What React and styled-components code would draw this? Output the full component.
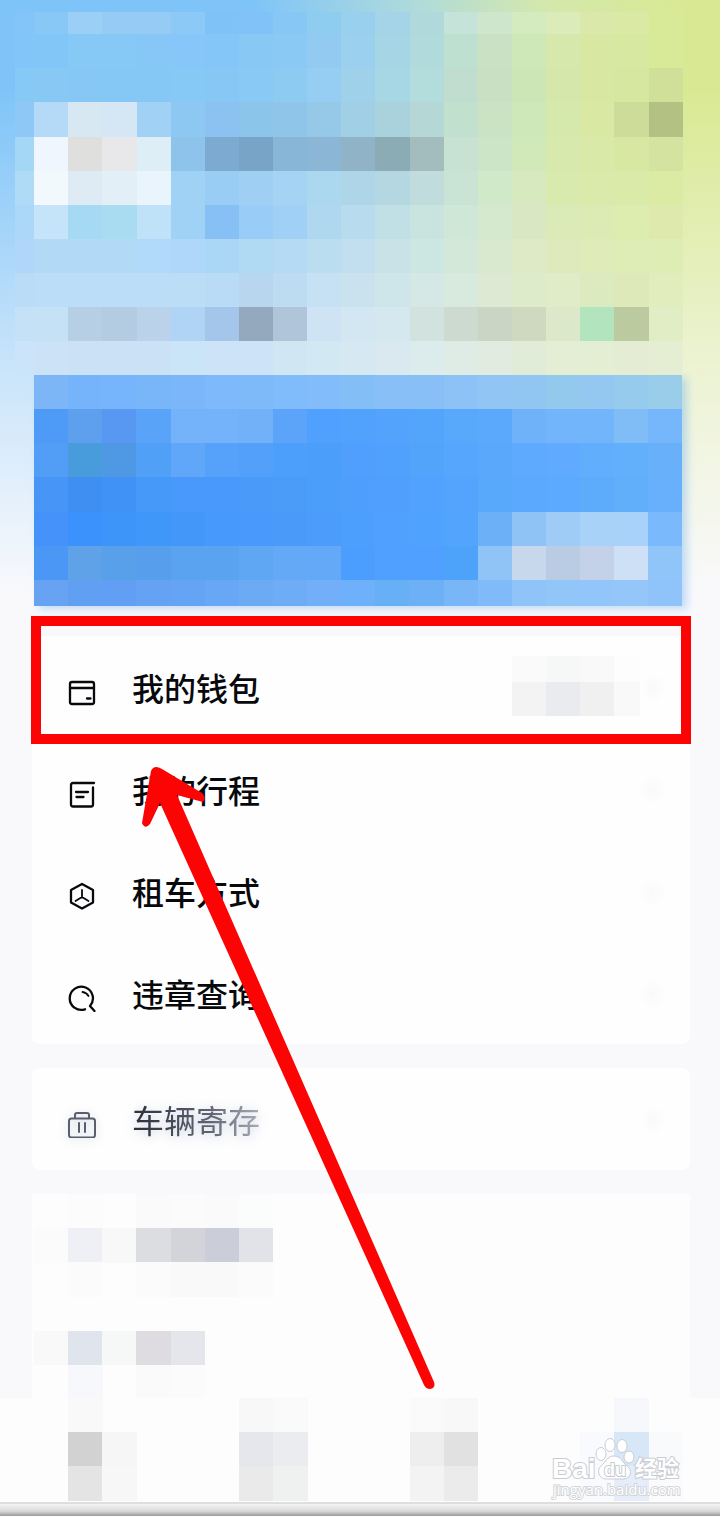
import styled, { createGlobalStyle, css } from "styled-components";

const CELL = 1024 / 30;

// Each row: space separated hex colours, "." leaves the cell empty
const PROFILE_ROWS = [
  "83c5f8 88c8f7 9bcff6 96cbf5 96cbf5 8cc9f7 7fc2f8 81c3f8 87c7f5 8ecdf0 99d0ee a5d4e8 b0d9db c5e3d8 cee6cb d4eabf dcebba dae9a9 dae9a4 d8e998",
  "82c5f8 82c5f7 86c8f6 86c8f6 86c7f7 86c6f9 85c6f9 87c8f5 8ac9f3 92caf1 9bd0ee a6d6e5 b0dadb bee0d0 cae2c3 cee8b7 d6e8ab d8e8a2 d7e8a1 d8e998",
  "86c8f6 88c8f5 86c7f5 85c8f5 85c8f5 87c9f6 87c7f5 89c9f5 8dcbf3 95cef2 9fd1ea a7d6e4 b3dcdc c0ddd0 c9e1c2 cce6b6 d5e7aa d8e8a2 d6e79f d1e098",
  "8dc8f6 b4daf7 d8e8f2 d5e7f4 a1d2f6 8dc8f3 8cc2f1 8cc5ea 90c5ea 96c9e8 a0cfe6 aad2dd b5d8d7 c1e0ce cbe3c3 cfe8b9 d6e9ad d9e9a3 cddc98 b3c283",
  "a4d6f6 eff6fd dfe0de e8e8ea deeef7 8ec4eb 7caad0 78a4c8 88b6d7 8cb6d6 90b3c8 8babb5 a3bdbe c7e2d3 cde5c7 d1e8b9 d7e9ad d9e9a8 d8e8a2 d4e39f",
  "b0dbf7 f2f9fc deebf5 e2eff7 e9f4fc a0d2f6 99cdf3 9fd0f3 a5d3f4 acd8ef aed5e8 b5d7e1 c1dcdc c9e4d5 d0e9c9 d6e9bf d9eaaf d9eaaa daeaa8 dceba4",
  "abd8f8 c5e3f9 a6d9f3 a9dbf1 c0e2f8 a0d2f6 87c0f5 99ccf6 a0d0f5 afd8f0 b8dcee c1e0e6 c9e4df cee7d7 d4e9ce dae7c3 dbebb7 dcebb3 ddecaf deeaad",
  "b0d7fa b2daf7 b2daf6 b2daf7 b0d9fa afd7f9 abd7f7 b0d9f4 b5daf3 badef0 c2dff0 c8e2e8 cce6e1 d3e8d9 d9e9cf ddeac5 deeabc dfecb9 deecb5 deedb3",
  "badcf6 bbddf7 bbddf7 bbddf7 bbddf7 bbdef6 b9dbf6 b9d6ef bedcf1 c5e1f3 cae1ee cee6ea d6e8e5 d8e9dd dee9d3 deebcb dfecc7 dcebbf dee9ba e1edbc",
  "c4e1f8 c5e1f6 b7cfe5 b3cce2 bad3ea b0d4f6 a4c6ea 94a9be b0c5da cee4f4 d3e7f3 d6e8ef d2e2df cddad0 cad5c6 cfd9c0 dbe8ca b2e5bd bbca9f e1edc5",
  "cce4fa cce3f7 cbe1f6 cbe1f6 cbe1f6 cae5f7 cde3f7 cde3f7 d0e7f3 d2e8f3 d6e8f2 dae9f0 dcebeb deece5 e1ebdf e0ebd8 e3eed5 e4eed3 e4edd3 e5eed2",
];

const BANNER_ROWS = [
  "7db6f6 75b3fb 76b4fb 79b5f9 7bb5fa 7eb9fb 7ebafa 80bbfb 82bcfa 84bef6 88bff7 88bff7 8cc2f5 90c5f4 91c6f3 94c9ee 94c8f0 97cbee 9acdea",
  "4e9bf7 5fa0ee 5898f2 59a3f9 74b2fa 74b2fa 72b1f8 5ba4fa 4fa0ff 51a2fc 53a3fd 53a5fc 58a8fc 5ba9fd 70b2fa 73b5fa 72b5fb 80bdf7 75b7fa",
  "529df5 489cdb 4f98e3 51a0f8 60a6f9 56a1f9 52a0fa 4d9ffc 4b9ffb 509fff 50a1fe 52a4fb 55a6fc 59a8fb 5daaff 60abff 60aefc 62affb 68b0f9",
  "4795f7 3f8ef1 4192f6 4698f9 4899fb 4899fb 4a9bf9 4b9cf9 4c9efb 4e9ffd 509fff 51a2fe 54a4fd 58a8fc 5aa9fe 5baaff 5cacfb 61aefb 68b0fb",
  "4492fa 3c92fc 3e95f9 3f97f9 4297f9 479afb 4899fb 4a9bf9 4b9cfb 4c9ffd 4fa0ff 50a2ff 53a4fc 6cb1f8 8fc3f6 9fccf6 a8d2f8 a9d2fa 79b9fc",
  "4a97f5 60a2e8 58a1ea 579fed 5aa3f0 5aa3f0 60a7f3 64a9f5 64a9f7 4b9efd 4fa0ff 50a1ff 4ca3f9 90c4f7 c7d8ed bacce3 c3d2e8 cee0f5 90c5fa",
  "68a2f3 609ff1 629ff4 65a2f4 65a3f4 68a6f6 6caaf4 6eacf6 72aff8 6eb0f9 67b0f5 6eb0f5 78b6f8 80baf8 90c4f8 92c5f8 92c5fa 94c6fa 8fc3fa",
];

const MORE_ROWS = [
  ". fcfcfc . fafafa fafbfa fafafa fbfcfc . . . . . . . . . . . .",
  "fbfbfb eef0f5 f8f8f8 dcdde1 d3d4da cbced8 e2e3e8",
  ". fbfbfb . fbfbfb f9f9f9 f9f9f9 fbfbfb",
  ".",
  "f9f9f9 e0e4ed f6f8f8 dedce1 e4e6eb",
  ". f6f8fb . fafafa fbfbfb",
];

const TAB_ROWS = [
  ". . f9f9f9 . . . . f8f8f8 fafafa . . . fafafa f8f8f8 . . . . f6f8fb .",
  ". . d2d2d2 f6f6f6 . . . e5e7ec ebecef . . . eeeeee e1e1e1 . . . f8fafd d7e7f7 f9fafc",
  ". . e4e4e4 f7f7f7 . . . eaeaea eef1f0 . . . f3f3f3 ebebeb . . . f9fafd e4edf9 fbfbfc",
];

const WALLET_ROWS = ["fafafa f5f8f7 f9f9f9 fdfdfd", "f3f3f4 e9ebee f0f0f0 f9f9f9"];

function Mosaic({ rows, viewBox, top = 0 }) {
  return (
    <MosaicSvg
      viewBox={viewBox}
      preserveAspectRatio="none"
      shapeRendering="crispEdges"
      aria-hidden="true"
    >
      {rows.map((row, y) =>
        row.split(" ").map((color, x) =>
          color === "." ? null : (
            <rect
              key={`${x}-${y}`}
              x={x * CELL}
              y={y * CELL - top}
              width={CELL + 0.5}
              height={CELL + 0.5}
              fill={`#${color}`}
            />
          )
        )
      )}
    </MosaicSvg>
  );
}

function WalletIcon() {
  return (
    <IconSvg viewBox="0 0 28 28">
      <rect x="2" y="4" width="24" height="22" rx="2" />
      <path d="M2 10H26M19 20.500H22.500" />
    </IconSvg>
  );
}

function TripIcon() {
  return (
    <IconSvg viewBox="0 0 28 28">
      <path d="M25 7.500V24.500Q25 26.500 23 26.500H5Q3 26.500 3 24.500V5Q3 3 5 3H26M8 12H20M8.500 17H15.500" />
    </IconSvg>
  );
}

function RentIcon() {
  return (
    <IconSvg viewBox="0 0 28 28">
      <path d="M14 2 25 8V20.500L14 26.500 3 20.500V8Z" />
      <path d="M14 8V15.500M14 15 7.500 19M14 15 20.500 19" strokeWidth="1.8" />
    </IconSvg>
  );
}

function QueryIcon() {
  return (
    <IconSvg viewBox="0 0 28 28">
      <path d="M17 25.300A11.600 11.600 0 1 1 22 22L26.500 27" />
      <path d="M14.500 8Q18.500 8.500 20.500 12" strokeWidth="1.8" />
    </IconSvg>
  );
}

function StorageIcon() {
  return (
    <IconSvg viewBox="0 0 28 28" $faded>
      <rect x="1" y="8.500" width="26" height="19" rx="2.500" />
      <path d="M7 8V5Q7 3 9 3H19Q21 3 21 5V8M11 13V22M17 13V22" />
    </IconSvg>
  );
}

const MENU = [
  { label: "我的钱包", icon: WalletIcon, marked: true },
  { label: "我的行程", icon: TripIcon },
  { label: "租车方式", icon: RentIcon },
  { label: "违章查询", icon: QueryIcon },
];

function MenuRow({ label, icon: Icon, marked, faded }) {
  return (
    <Row href="#">
      <Icon />
      <Label $faded={faded}>{label}</Label>
      {marked && (
        <Balance>
          <Mosaic rows={WALLET_ROWS} viewBox="0 8 128 60" />
        </Balance>
      )}
      <Smudge />
      {marked && <Frame />}
    </Row>
  );
}

function Watermark() {
  return (
    <WatermarkLink href="#">
      <svg width="136" height="66" viewBox="0 0 136 66">
        <g fill="#ffffff" stroke="#c9ccd1" strokeWidth="1">
          <ellipse cx="53" cy="20" rx="5" ry="6.500" />
          <ellipse cx="62" cy="11" rx="5" ry="6.500" />
          <ellipse cx="74" cy="12" rx="5" ry="6.500" />
          <ellipse cx="81" cy="23" rx="5" ry="6" />
          <path d="M66 22C59 22 58 28 53 32C48 36 51 45 58 45H75C83 45 85 36 79 32C74 28 73 22 66 22Z" />
        </g>
        <g fill="#ffffff" stroke="#c9ccd1" strokeWidth="2" paintOrder="stroke" fontWeight="700">
          <text x="4" y="44" fontSize="28" fontFamily="Liberation Sans, sans-serif">Bai</text>
          <text x="56" y="42" fontSize="18" fontFamily="Liberation Sans, sans-serif">du</text>
          <text x="87" y="42" fontSize="22" fontFamily="Noto Sans CJK SC, sans-serif">经验</text>
        </g>
        <text
          x="5"
          y="61"
          fill="#ffffff"
          stroke="#d3d5d9"
          strokeWidth="2"
          paintOrder="stroke"
          fontSize="15"
          fontFamily="Open Sans, sans-serif"
        >
          jingyan.baidu.com
        </text>
      </svg>
    </WatermarkLink>
  );
}

function App() {
  return (
    <Page>
      <GlobalStyle />
      <Header>
        <Profile>
          <Mosaic rows={PROFILE_ROWS} viewBox="15 12 705 363" />
        </Profile>
        <Banner>
          <Mosaic rows={BANNER_ROWS} viewBox="0 0 648 231" />
        </Banner>
      </Header>
      <Main>
        <Card>
          {MENU.map((item) => (
            <MenuRow key={item.label} {...item} />
          ))}
        </Card>
        <Card>
          <MenuRow label="车辆寄存" icon={StorageIcon} faded />
        </Card>
        <MoreCard>
          <Mosaic rows={MORE_ROWS} viewBox="-2 0 658 204" />
        </MoreCard>
        <Arrow width="300" height="630" viewBox="138 762 300 630" aria-hidden="true">
          <path d="M151 771Q154 764 162 769L202 793Q207 798 203 802L177 795L434 1382Q436 1388 430 1389Q426 1389 424 1385L160 803L150 824Q145 830 142 823Z" />
        </Arrow>
      </Main>
      <TabBar>
        <Tabs>
          <Mosaic rows={TAB_ROWS} viewBox="0 0 720 104" />
        </Tabs>
        <TabEdge />
        <Watermark />
      </TabBar>
    </Page>
  );
}

export default App

const GlobalStyle = createGlobalStyle`
  body {
    margin: 0;
    background-color: #f9f9fc;
    font-family: "Noto Sans CJK SC", sans-serif;
  }
`;

const MosaicSvg = styled.svg`
  display: block;
  width: 100%;
  height: 100%;
`;

const Page = styled.div`
  overflow: hidden;
`;

const Header = styled.header`
  padding-top: 12px;
  background:
    linear-gradient(to bottom, rgba(249, 249, 252, 0) 15%, rgba(249, 249, 252, 0.6) 60%, #f9f9fc 98%),
    linear-gradient(to right, #7fc4f8 35%, #b0dbdb 58%, #d3e8ae 75%, #d9e993 95%);
`;

const Profile = styled.div`
  height: 363px;
  padding-left: 15px;
`;

const Banner = styled.section`
  height: 231px;
  margin: 0 38px 0 34px;
  box-shadow: 5px 3px 8px rgba(110, 175, 240, 0.4);
`;

const Main = styled.main`
  position: relative;
  display: flex;
  flex-direction: column;
  gap: 24px;
  padding: 30px 30px 0 32px;
`;

const Card = styled.section`
  display: flex;
  flex-direction: column;
  gap: 10px;
  padding-top: 10px;
  border-radius: 8px;
  background-color: #fefefe;
`;

const MoreCard = styled.section`
  height: 204px;
  background-color: #fdfdfd;
`;

const Row = styled.a`
  position: relative;
  display: flex;
  align-items: center;
  height: 92px;
  padding: 0 24px 0 36px;
  color: #08090c;
  text-decoration: none;
`;

const IconSvg = styled.svg`
  flex: none;
  width: 28px;
  height: 28px;
  margin-right: 36px;
  fill: none;
  stroke: ${(props) => (props.$faded ? "#5b5e6b" : "#08090c")};
  stroke-width: ${(props) => (props.$faded ? 2 : 2.3)};
  stroke-linecap: round;
  stroke-linejoin: round;
  ${(props) => props.$faded && css`
    filter: drop-shadow(0 2px 5px rgba(120, 140, 180, 0.4));
  `}
`;

const Label = styled.span`
  flex: 1;
  font-size: 32px;
  font-weight: 500;
  line-height: 40px;
  padding-bottom: 10px;
  ${(props) => props.$faded && css`
    flex: none;
    margin-right: auto;
    font-weight: 400;
    color: transparent;
    background: linear-gradient(to right, #2c2f3a, #5f6370 60%, #a9acb6);
    background-clip: text;
    filter: drop-shadow(0 2px 6px rgba(120, 140, 180, 0.4));
  `}
`;

const Balance = styled.span`
  width: 128px;
  height: 60px;
  margin-bottom: 12px;
`;

const Smudge = styled.span`
  width: 26px;
  height: 30px;
  margin-bottom: 8px;
  background: radial-gradient(closest-side, #f9f9f9, #fefefe);
`;

const Frame = styled.span`
  position: absolute;
  top: -30px;
  right: -1px;
  left: -1px;
  box-sizing: border-box;
  height: 128px;
  border: 10px solid #fd0404;
`;

const Arrow = styled.svg`
  position: absolute;
  top: 156px;
  left: 138px;
  fill: #fd0404;
`;

const TabBar = styled.nav`
  position: relative;
  background-color: #fdfdfd;
`;

const Tabs = styled.div`
  height: 104px;
`;

const TabEdge = styled.div`
  height: 12px;
  border-top: 2px solid #dedede;
  background: linear-gradient(to bottom, #f4f4f4, #d9d9d9 60%, #999999);
`;

const WatermarkLink = styled.a`
  position: absolute;
  right: 36px;
  bottom: 16px;
  line-height: 0;
`;
